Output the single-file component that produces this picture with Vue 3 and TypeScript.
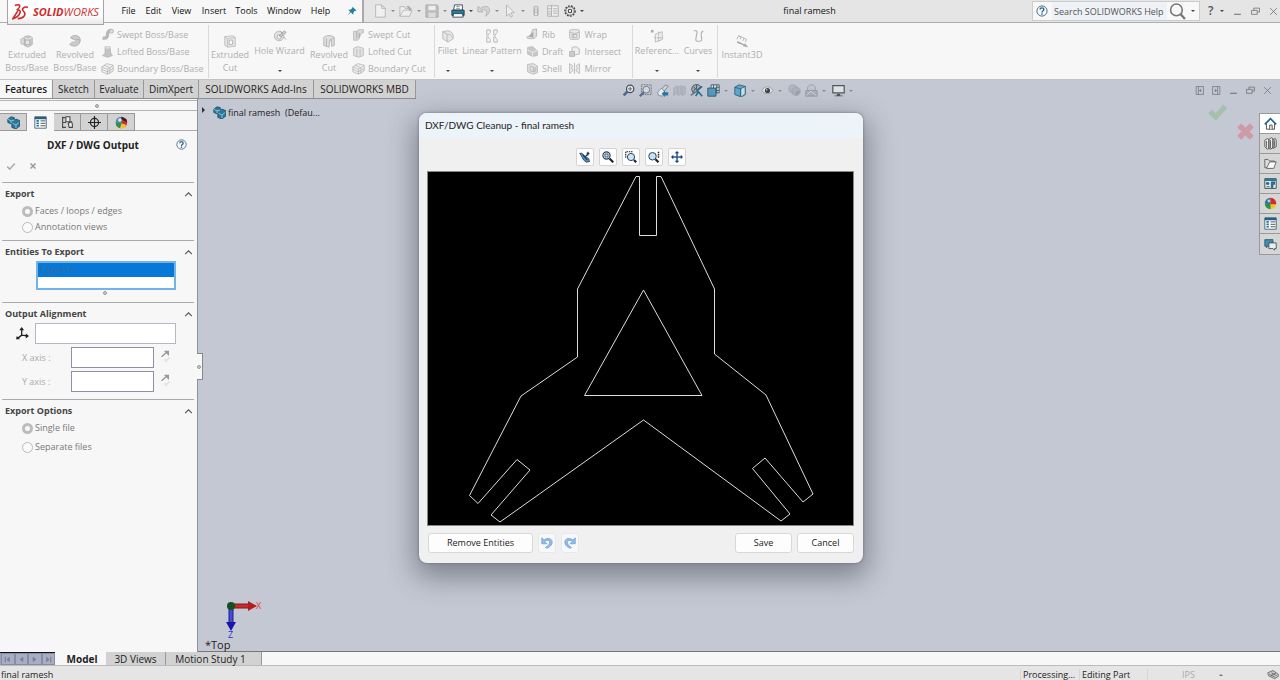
<script setup lang="ts">
import { ref } from 'vue'

interface Command { label: string; icon: string; lines?: string[]; menu?: boolean; width?: string }
interface Group { width: string; large: Command[]; lists: Command[][] }

const icons: Record<string, string> = {
  extrude: '<path d="M1 6l4-2v8l-4-1z" fill="#ddd" stroke="#b4b4b4"/><path d="M5 3l5-1 4 2v8l-5 3-4-2z" fill="#c8c8c8" stroke="#b0b0b0"/><path d="M9 6v8M5 4l4 2 5-2" fill="none" stroke="#eee"/><path d="M6 7h5v5H6z" fill="#e6e6e6" stroke="#b0b0b0"/>',
  revolve: '<path d="M3 4c3-4 11-3 11 3 0 6-7 9-12 5l3-3c4 2 5-3 1-3z" fill="#cbcbcb" stroke="#aeaeae"/><path d="M3 4l3 2M9 6l5 1" stroke="#aeaeae"/>',
  sweep: '<path d="M2 12c5 2 6-2 6-4s1-5 5-5" fill="none" stroke="#b8b8b8" stroke-width="4"/><circle cx="13" cy="4" r="2.4" fill="#ddd" stroke="#b0b0b0"/>',
  loft: '<path d="M5 2h6l1 8 2 3-6 2-6-2 3-3z" fill="#c4c4c4" stroke="#b4b4b4"/><ellipse cx="8" cy="3" rx="3" ry="1.5" fill="#ddd"/>',
  boundary: '<path d="M1 6l6-4 8 2v7l-7 4-7-3zM1 6l7 3 7-5M8 9v6M4 4l7 3v7M1 9l7 3 7-4" fill="#eee" stroke="#b8b8b8"/>',
  cut: '<path d="M2 3l9-1 3 2v10l-9 1-3-2zM2 3l3 2 9-1M5 5v10" fill="#e8e8e8" stroke="#bababa"/><path d="M7 7h4v5H7z" fill="#f7f7f7" stroke="#b0b0b0"/>',
  hole: '<circle cx="7" cy="8" r="5.5" fill="#e2e2e2" stroke="#b5b5b5"/><circle cx="7" cy="9" r="2.5" fill="#f7f7f7" stroke="#aaa"/><path d="M7 8l6-6 2 2-6 5zM9 3l2 3M12 9l3 3" fill="#ccc" stroke="#a4a4a4"/>',
  revcut: '<path d="M2 4c3-3 9-3 12 0v9l-3 1V7H9l-1 8-3-1-3-1z" fill="#e0e0e0" stroke="#b0b0b0"/><path d="M5 5v9M9 7l5-3" stroke="#b0b0b0"/>',
  sweepcut: '<path d="M2 4h4l2-2h6v4c-5 0-4 8-7 9H2z" fill="#d8d8d8" stroke="#b8b8b8"/><path d="M6 4v9M9 6v6" stroke="#a4a4a4"/>',
  loftcut: '<path d="M2 4l5-2 7 2v9l-6 2-6-2zM6 5v9M10 5v9" fill="#e3e3e3" stroke="#b8b8b8"/>',
  fillet: '<path d="M2 3l6-1c4 1 6 3 6 6v3l-6 4-6-4z" fill="#e6e6e6" stroke="#b8b8b8"/><path d="M2 3l5 3v9M7 6c3 0 5 1 6 4" fill="none" stroke="#b8b8b8"/>',
  pattern: '<path d="M2 1h4v3L4 6v1H2zM10 1h4v3l-2 2v1h-2zM2 9h2v1l2 2v3H2zM10 9h2v1l2 2v3h-4z" fill="#f4f4f4" stroke="#b0b0b0"/>',
  rib: '<path d="M8 2l5-1v9l-3 3H2l-1-2 5-2z" fill="#ddd" stroke="#b4b4b4"/><path d="M3 10l6-5v7z" fill="#aaa"/>',
  draft: '<path d="M2 3l6-1 6 5v6l-6 1-6-3z" fill="#c8c8c8" stroke="#b8b8b8"/><path d="M2 6l6 3 6-2M8 9v6" fill="none" stroke="#eee"/>',
  shell: '<path d="M2 3l7-1 5 3v8l-5 2-7-3zM5 5l4 1v6l-4-1z" fill="#e3e3e3" stroke="#b0b0b0"/><path d="M10 7v6M12 6v6" stroke="#b0b0b0"/>',
  wrap: '<rect x="2" y="2" width="12" height="12" rx="2" fill="#e8e8e8" stroke="#b4b4b4"/><path d="M2 5c4 2 8 2 12 0M5 8h6v4H5zM7 8v4" fill="none" stroke="#b0b0b0"/>',
  intersect: '<path d="M5 3l5-1 4 3v6l-5 1-4-2z" fill="#eee" stroke="#b0b0b0"/><path d="M2 8h6v6H2z" fill="#ccc" stroke="#b0b0b0"/>',
  mirror: '<path d="M2 2v12l4-3V9L4 8l2-3zM14 2v12l-4-3V9l2-1-2-3zM8 1v14" fill="#eee" stroke="#b0b0b0"/>',
  reference: '<path d="M1 1h3v3H1z" fill="#aaa"/><path d="M6 6l8-3v9l-8 3z" fill="#eee" stroke="#b8b8b8"/><path d="M10 3v12M5 10h10" fill="none" stroke="#aaa" stroke-dasharray="2 1"/>',
  curves: '<path d="M3 2h3c3 0-3 12 1 12h3c5 0 0-8 2-10l2-2" fill="none" stroke="#b0b0b0" stroke-width="1.300"/>',
  instant: '<path d="M2 6l2-4 2 1M4 2l9 4-1 3M7 3L6 6M10 5L9 8" fill="none" stroke="#b0b0b0"/><path d="M3 8l8 4v-2l4 5-6-1 1-1-8-3z" fill="#aaa"/>',
  page: '<path d="M3 1h7l4 4v10H3zM10 1v4h4" fill="#f0f0f0" stroke="#b4b4b4"/>',
  open: '<path d="M1 14V3h5l1 2h5v3M1 14L5 7h10l-3 7z" fill="#eee" stroke="#b4b4b4"/><path d="M8 3c3-2 5 0 5 2l2-1-2 4-3-3h2" fill="#aaa"/>',
  save: '<path d="M1 1h13l1 2v12H1z" fill="#bdbdbd" stroke="#acacac"/><path d="M4 2h8v5H4z" fill="#eee"/><path d="M4 10h8v5H4z" fill="#ddd"/>',
  print: '<path d="M4 1h9v6H3z" fill="#fff" stroke="#345"/><path d="M1 7h14v6H1z" fill="#257ba0" stroke="#213844"/><path d="M3 11h10l1 4H2z" fill="#fff" stroke="#345"/><path d="M6 3h4M6 5h4" stroke="#889"/>',
  undo: '<path d="M1 3v6h6L5 7c4-2 8 0 5 7 7-5 5-12-1-11-2 0-4 1-5 2z" fill="#d4d4d4" stroke="#b0b0b0"/>',
  cursor: '<path d="M4 1v13l3-3 2 4 2-1-2-4h4z" fill="#eee" stroke="#b0b0b0"/>',
  traffic: '<rect x="4.500" y="1" width="7" height="14" rx="3" fill="#b4b4b4"/><circle cx="8" cy="4" r="2" fill="#ddd"/><circle cx="8" cy="8" r="1.600" fill="#ddd"/><circle cx="8" cy="12" r="1.600" fill="#eee"/>',
  sheet: '<path d="M1 1h14v14H1zM6 1v14M1 5h5M1 9h5M1 12h5M8 5h6M8 8h6M8 11h6" fill="#eee" stroke="#a4a4a4"/>',
  gear: '<circle cx="8" cy="8" r="6.800" fill="none" stroke="#444" stroke-width="1.800" stroke-dasharray="2.300 1.780"/><circle cx="8" cy="8" r="5.600" fill="#eee" stroke="#444"/><circle cx="8" cy="8" r="2.300" fill="#fff" stroke="#444" stroke-width="1.500"/>',
  pin: '<path d="M9 1l6 6-2 1-1 0-2 3v3L6 10l-5 5 4-6-3-3h3l3-2z" fill="#257fa3"/>',
  help: '<circle cx="8" cy="8" r="6.800" fill="#f4fafd" stroke="#536b7c" stroke-width="1.300"/><path d="M5.500 6c0-3 5-3 5 0 0 2-2.500 1.500-2.500 4M8 11v2" fill="none" stroke="#1c688e" stroke-width="1.800"/>',
  zoomfit: '<path d="M6.500 9.500L2 14" stroke="#466f90" stroke-width="3.200"/><circle cx="10" cy="6" r="4.500" fill="#dce6ee" stroke="#49525d" stroke-width="1.500"/><path d="M7.500 6h5M10 3.500v5" stroke="#555"/>',
  zoomarea: '<path d="M3 1h12v12H3z" fill="none" stroke="#666" stroke-dasharray="2 1"/><path d="M6 10l-5 5" stroke="#527491" stroke-width="2.800"/><circle cx="9" cy="7" r="4.200" fill="#cbdce8" stroke="#666"/>',
  previous: '<path d="M12 1l3 2-6 7-3-3z" fill="#d0d5da" stroke="#707880"/><path d="M7 5L2 10l1 4 5 1 3-5z" fill="#e8ecef" stroke="#7b858f"/><path d="M15 10h-4V8l-4 4 4 4v-2h4z" fill="#247ba5"/>',
  section: '<path d="M1 5l4-3v9l-4 3zM6 4l4-2v10l-4 2zM11 3h4v9l-4 2z" fill="#b6bac4" stroke="#a3a8b4"/>',
  orient: '<path d="M2 7c0-7 8-8 11-4l-4 4-3-1-2 5z" fill="#a4adb5" stroke="#3d464e"/><path d="M4 3l3 3M8 1v5" stroke="#3d464e"/><path d="M1 14l7-5 3 2" fill="none" stroke="#6d7982" stroke-width="2"/><path d="M15 15L9 8l6-5M7 15l3-5" fill="none" stroke="#256f96" stroke-width="2"/>',
  views: '<path d="M5 1h10v10h-4V6H5z" fill="#d5dfe5" stroke="#34505f"/><path d="M1 5h10v10H1z" fill="#559bc0" stroke="#284c62"/><path d="M8 1v4M12 1v10M11 4h4M11 8h4" stroke="#34505f"/>',
  style: '<path d="M1 4l5-3 8 2v10l-5 3-8-3z" fill="#5da8cc" stroke="#31596f"/><path d="M1 4l7 2 6-3M8 6v9" fill="none" stroke="#31596f"/><path d="M9 6l4-2v8l-4 3z" fill="#cbdde7"/>',
  eye: '<path d="M1 8c4-6 10-6 14 0-4 5-10 5-14 0z" fill="#e6e9ee" stroke="#8c929d"/><circle cx="8" cy="8" r="3.200" fill="#444"/><circle cx="7" cy="7" r="1" fill="#ccc"/>',
  ballgray: '<circle cx="6" cy="6" r="5" fill="#b2b6c0" stroke="#a0a5b0"/><circle cx="10" cy="9" r="5" fill="#abb0ba" stroke="#a0a5b0"/><path d="M10 9h5l-5 5z" fill="#969ba7"/>',
  scene: '<circle cx="8" cy="6" r="5" fill="#bfc3cd" stroke="#989eaa"/><path d="M1 8h14v7H1z" fill="#a8adb8" stroke="#9298a4"/><path d="M2 14l5-5 7 5" fill="none" stroke="#ddd"/>',
  monitor: '<path d="M1 2h14v9H1z" fill="#dde3e8" stroke="#555" stroke-width="1.500"/><path d="M6 12h4v2h3v1H3v-1h3z" fill="#555"/>',
  part: '<path d="M1 4l4-3 4 1v3l3-1 4 2v6l-5 4-5-2V10L1 8z" fill="#2c789d" stroke="#17475f"/><path d="M1 4l4 2 4-1M5 6v3M7 9l4 2 4-3M11 11v4" fill="none" stroke="#9fd0e4"/>',
  props: '<path d="M1 1h14v14H1z" fill="#fff" stroke="#285672"/><path d="M1 1h14v3H1z" fill="#265f81"/><path d="M3 6h3M3 9h3M3 12h3" stroke="#2c789d" stroke-width="2"/><path d="M8 6h6M8 9h6M8 12h6" stroke="#333"/>',
  config: '<path d="M2 1v14M2 2h3M2 8h4M2 14h4M6 1h5v6H6zM9 9l4-2 1 3v4h-4z" fill="#eee" stroke="#444" stroke-width="1.300"/>',
  target: '<circle cx="8" cy="8" r="5" fill="none" stroke="#222" stroke-width="1.500"/><path d="M0 8h16M8 0v16" stroke="#222" stroke-width="1.400"/>',
  ball: '<circle cx="8" cy="8" r="7" fill="#efc52b"/><path d="M8 1a7 7 0 00-7 7l7 1z" fill="#3268b0"/><path d="M8 1a7 7 0 017 8L8 9z" fill="#d22c31"/><path d="M1 8l7 1v6a7 7 0 01-7-7z" fill="#22954b"/><circle cx="6" cy="5" r="1.800" fill="#fff" opacity=".65"/>',
  palette: '<circle cx="8" cy="8" r="7" fill="#d22c31"/><path d="M8 1a7 7 0 00-7 7l7 1z" fill="#3d9bc1"/><path d="M8 1l6 3 1 4-7-4z" fill="#302326"/><path d="M1 8l7 1-2 6a7 7 0 01-5-7z" fill="#22954b"/><path d="M8 9l6 2a7 7 0 01-8 4z" fill="#efc52b"/><circle cx="6" cy="5" r="2.200" fill="#fff" opacity=".8"/>',
  home: '<path d="M3 8v7h10V8" fill="#fff" stroke="#333"/><path d="M1 9l7-7 7 7" fill="none" stroke="#1d6287" stroke-width="2"/><path d="M7 15v-5h3v5" fill="#fff" stroke="#333"/>',
  library: '<path d="M1 4l3-2 2 1v11l-2 1-3-3zM6 3l3-2 2 1v11l-3 2-2-1zM11 3l3-1 1 2v8l-4 2z" fill="#eee" stroke="#444"/><path d="M3 5v8M8 4v10M13 4v8" stroke="#444"/>',
  folder: '<path d="M1 13V3h4l2 2h6v3L9 14z" fill="#ddd" stroke="#555"/><path d="M3 14L7 6h8l-3 8z" fill="#fafafa" stroke="#555"/>',
  viewpal: '<path d="M1 2h14v12H1z" fill="#e4f2f7" stroke="#333"/><path d="M1 2h14v3H1z" fill="#2c789d"/><path d="M3 7h3v2H3zM9 6h4v3h-2v4H9zM3 12h4" fill="#2c789d" stroke="#24546c"/>',
  forum: '<path d="M1 2h10v8H5l-2 2v-2H1z" fill="#3e8dae" stroke="#24546c"/><path d="M6 6h9v7h-2v2l-2-2H6z" fill="#e4f0f4" stroke="#444"/>',
  minimize: '<path d="M2 12h12v2H2z" fill="#777"/>',
  restore: '<path d="M5 6V2h10v7h-4M1 6h10v7H1z" fill="none" stroke="#777" stroke-width="1.500"/>',
  close: '<path d="M2 2l12 12M14 2L2 14" stroke="#777" stroke-width="1.500"/>',
  paneleft: '<path d="M2 1h13v14H2zM6 1v14" fill="none" stroke="#777d8a" stroke-width="1.500"/><path d="M11 5v6L7 8z" fill="#777"/>',
  paneright: '<path d="M1 1h13v14H1zM10 1v14" fill="none" stroke="#777d8a" stroke-width="1.500"/><path d="M5 5v6l4-3z" fill="#777"/>',
  search: '<circle cx="7" cy="6.500" r="5.500" fill="#f8f8f8" stroke="#777" stroke-width="1.500"/><path d="M11 10.500l4 4.500" stroke="#777" stroke-width="2.200"/>',
  check: '<path d="M1 9l3-3 3 3 6-7 3 3-9 10z" fill="currentColor"/>',
  cross: '<path d="M1 4l3-3 4 4 4-4 3 3-4 4 4 4-3 3-4-4-4 4-3-3 4-4z" fill="currentColor" stroke="currentColor" stroke-linejoin="round"/>',
  tick: '<path d="M2 9l4 4 8-9" fill="none" stroke="#aaa" stroke-width="2.400"/>',
  smallx: '<path d="M4 4l8 8M12 4l-8 8" stroke="#999" stroke-width="2.400"/>',
  axes: '<path d="M7 2v8l7 1M7 10l-5 4" fill="none" stroke="#222" stroke-width="1.600"/><path d="M4 4l3-4 3 4zM12 8l4 3-4 3zM1 11l4 4H0z" fill="#222"/>',
  flip: '<path d="M2 9l7-6" stroke="#999" stroke-width="2"/><path d="M5 1h7v7z" fill="#999"/><path d="M8 14l5-4M7 12v4h4" stroke="#ddd" fill="none" stroke-width="1.500"/>',
  pen: '<path d="M1 3l3 0 5 5 4 2 1 4-4 1-4-3-2-4z" fill="#4c8fc0" stroke="#1b344c"/><path d="M5 5l6 7M8 8l5-5M14 3h-4M12 1v5" fill="none" stroke="#1d3453" stroke-width="1.500"/>',
  lensfit: '<circle cx="6" cy="6" r="4.800" fill="#cfe6f5" stroke="#29405c" stroke-width="1.500"/><path d="M10 10l5 5" stroke="#1b2739" stroke-width="3"/><path d="M4 4h4v4H4z" fill="none" stroke="#29405c"/>',
  lensarea: '<path d="M1 9V1h9" fill="none" stroke="#222" stroke-width="1.500" stroke-dasharray="2 1"/><circle cx="8" cy="8" r="4.800" fill="#cfe6f5" stroke="#29405c" stroke-width="1.300"/><path d="M12 12l3 3" stroke="#1b2739" stroke-width="3"/>',
  lensdyn: '<circle cx="6" cy="7" r="5" fill="#c4e3f4" stroke="#29405c" stroke-width="1.300"/><path d="M10 11l4 4" stroke="#1b2739" stroke-width="3"/><path d="M14 1v9" stroke="#222" stroke-width="2" stroke-dasharray="2 1"/>',
  pan: '<path d="M8 2v12M2 8h12" stroke="#245e9d" stroke-width="2"/><path d="M8 0l3 3H5zM8 16l3-3H5zM0 8l3-3v6zM16 8l-3-3v6z" fill="#173e7b"/>',
  back: '<path d="M1 1v8h7L5 6c4-4 9 0 5 5l-4 3 2 1c10-4 8-14 1-13-2 0-4 1-5 2z" fill="#94bce6" stroke="#6d9ed6"/>',
  forward: '<path d="M15 1v8H8l3-3C7 2 2 6 6 11l4 3-2 1C-2 11 0 1 7 2c2 0 4 1 5 2z" fill="#94bce6" stroke="#6d9ed6"/>',
  first: '<path d="M4 3v10" stroke="#777d9b" stroke-width="2"/><path d="M12 3v10L6 8z" fill="#777d9b"/>',
  prev: '<path d="M11 3v10L5 8z" fill="#777d9b"/>',
  next: '<path d="M5 3v10l6-5z" fill="#777d9b"/>',
  last: '<path d="M12 3v10" stroke="#777d9b" stroke-width="2"/><path d="M4 3v10l6-5z" fill="#777d9b"/>',
  tag: '<path d="M1 5l7-3 7 5v3l-5 3-8-4z" fill="#ccc" stroke="#555"/><path d="M3 7l8 4M6 5l7 4M5 9l7-4" stroke="#555"/>',
  chevron: '<path d="M2 11l6-6 6 6" fill="none" stroke="#555" stroke-width="2"/>',
}

const menus = [
  { label: 'File', width: 'w25' }, { label: 'Edit', width: 'w25' }, { label: 'View', width: 'w31' },
  { label: 'Insert', width: 'w34' }, { label: 'Tools', width: 'w31' }, { label: 'Window', width: 'w44' }, { label: 'Help', width: 'w29' },
]
const quick = [
  { icon: 'page', name: 'New' }, { icon: 'open', name: 'Open' }, { icon: 'save', name: 'Save file' },
  { icon: 'print', name: 'Print', on: true }, { icon: 'undo', name: 'Undo' }, { icon: 'cursor', name: 'Select' },
]
const groups: Group[] = [
  {
    width: 'w206',
    large: [
      { label: 'Extruded Boss/Base', lines: ['Extruded', 'Boss/Base'], icon: 'extrude', width: 'w48' },
      { label: 'Revolved Boss/Base', lines: ['Revolved', 'Boss/Base'], icon: 'revolve', width: 'w48' },
    ],
    lists: [[{ label: 'Swept Boss/Base', icon: 'sweep' }, { label: 'Lofted Boss/Base', icon: 'loft' }, { label: 'Boundary Boss/Base', icon: 'boundary' }]],
  },
  {
    width: 'w226',
    large: [
      { label: 'Extruded Cut', lines: ['Extruded', 'Cut'], icon: 'cut', width: 'w42' },
      { label: 'Hole Wizard', lines: ['Hole Wizard'], icon: 'hole', menu: true, width: 'w57' },
      { label: 'Revolved Cut', lines: ['Revolved', 'Cut'], icon: 'revcut', width: 'w42' },
    ],
    lists: [[{ label: 'Swept Cut', icon: 'sweepcut' }, { label: 'Lofted Cut', icon: 'loftcut' }, { label: 'Boundary Cut', icon: 'boundary' }]],
  },
  {
    width: 'w198',
    large: [
      { label: 'Fillet', lines: ['Fillet'], icon: 'fillet', menu: true, width: 'w25' },
      { label: 'Linear Pattern', lines: ['Linear Pattern'], icon: 'pattern', menu: true, width: 'w64' },
    ],
    lists: [
      [{ label: 'Rib', icon: 'rib' }, { label: 'Draft', icon: 'draft' }, { label: 'Shell', icon: 'shell' }],
      [{ label: 'Wrap', icon: 'wrap' }, { label: 'Intersect', icon: 'intersect' }, { label: 'Mirror', icon: 'mirror' }],
    ],
  },
  {
    width: 'w85',
    large: [
      { label: 'Reference Geometry', lines: ['Referenc...'], icon: 'reference', menu: true, width: 'w48' },
      { label: 'Curves', lines: ['Curves'], icon: 'curves', menu: true, width: 'w34' },
    ],
    lists: [],
  },
  { width: 'w50', large: [{ label: 'Instant3D', lines: ['Instant3D'], icon: 'instant', width: 'w48' }], lists: [] },
]
const tabs = [
  { label: 'Features', width: 'w53' }, { label: 'Sketch', width: 'w42' }, { label: 'Evaluate', width: 'w49' },
  { label: 'DimXpert', width: 'w55' }, { label: 'SOLIDWORKS Add-Ins', width: 'w115' }, { label: 'SOLIDWORKS MBD', width: 'w102' },
]
const hud = [
  { icon: 'zoomfit', name: 'Zoom to fit' }, { icon: 'zoomarea', name: 'Zoom to area' }, { icon: 'previous', name: 'Previous view' },
  { icon: 'section', name: 'Section view' }, { icon: 'orient', name: 'Dynamic annotation views' },
  { icon: 'views', name: 'View orientation', menu: true }, { icon: 'style', name: 'Display style', menu: true },
  { icon: 'eye', name: 'Hide or show items', menu: true }, { icon: 'ballgray', name: 'Edit appearance' },
  { icon: 'scene', name: 'Apply scene', menu: true }, { icon: 'monitor', name: 'View settings', menu: true },
]
const managers = [
  { icon: 'part', name: 'Feature tree' }, { icon: 'props', name: 'Property manager' }, { icon: 'config', name: 'Configurations' },
  { icon: 'target', name: 'Dimensions' }, { icon: 'palette', name: 'Display manager' },
]
const taskPane = ['home', 'library', 'folder', 'viewpal', 'ball', 'props', 'forum']
const cleanupTools = [
  { icon: 'pen', name: 'Select' }, { icon: 'lensfit', name: 'Zoom to fit' }, { icon: 'lensarea', name: 'Zoom to area' },
  { icon: 'lensdyn', name: 'Zoom in or out' }, { icon: 'pan', name: 'Pan' },
]
const activeTab = ref('Features')
const source = ref('faces')
const files = ref('single')
</script>

<template>
  <div class="app">
    <header class="titlebar">
      <div class="menu-area">
        <div class="logo">
          <svg class="ds" viewBox="0 0 18 18" aria-hidden="true"><path d="M3 2c6-2 7 1 2 5M5 7c7-1 3 7-4 9l5-8M17 4c-5-1-7 2-5 4 4 4 0 8-6 8" fill="none" stroke="#cf2a27" stroke-width="1.700" /></svg>
          <span class="brand"><b>SOLID</b>WORKS</span>
        </div>
        <nav class="menus" aria-label="Main menu">
          <button v-for="m in menus" :key="m.label" type="button" :class="m.width">{{ m.label }}</button>
        </nav>
        <button class="pin" type="button" aria-label="Pin menu"><svg class="i10" viewBox="0 0 16 16" v-html="icons.pin" /></button>
      </div>
      <div class="quick">
        <button v-for="q in quick" :key="q.icon" type="button" class="quick-btn" :aria-label="q.name">
          <svg class="i14" viewBox="0 0 16 16" v-html="icons[q.icon]" /><i class="caret" :class="{ on: q.on }" />
        </button>
        <button type="button" class="slim" aria-label="Rebuild"><svg class="i12" viewBox="0 0 16 16" v-html="icons.traffic" /></button>
        <button type="button" class="slim" aria-label="File properties"><svg class="i12" viewBox="0 0 16 16" v-html="icons.sheet" /></button>
        <button type="button" class="quick-btn" aria-label="Options"><svg class="i12" viewBox="0 0 16 16" v-html="icons.gear" /><i class="caret on" /></button>
      </div>
      <div class="doc-name">final ramesh</div>
      <div class="search">
        <svg class="i12" viewBox="0 0 16 16" v-html="icons.help" />
        <input type="text" placeholder="Search SOLIDWORKS Help" aria-label="Search SOLIDWORKS Help" />
        <button type="button" aria-label="Search"><svg class="i17" viewBox="0 0 16 16" v-html="icons.search" /></button>
        <i class="caret on" />
      </div>
      <div class="window-controls">
        <button type="button" class="question" aria-label="Help menu">?<i class="caret on" /></button>
        <button v-for="c in ['minimize', 'restore', 'close']" :key="c" type="button" :aria-label="c"><svg class="i9" viewBox="0 0 16 16" v-html="icons[c]" /></button>
      </div>
    </header>

    <section class="ribbon" aria-label="Features toolbar">
      <div v-for="(g, gi) in groups" :key="gi" class="group" :class="g.width">
        <button v-for="c in g.large" :key="c.label" type="button" class="large" :class="[c.width, { dropdown: c.menu }]" :aria-label="c.label">
          <svg class="i14" viewBox="0 0 16 16" v-html="icons[c.icon]" />
          <span v-for="l in c.lines" :key="l">{{ l }}</span>
          <i v-if="c.menu" class="caret on" />
        </button>
        <div v-for="(list, li) in g.lists" :key="li" class="list">
          <button v-for="c in list" :key="c.label" type="button"><svg class="i13" viewBox="0 0 16 16" v-html="icons[c.icon]" />{{ c.label }}</button>
        </div>
      </div>
    </section>

    <div class="tab-row">
      <nav class="tabs" aria-label="Command tabs">
        <button v-for="t in tabs" :key="t.label" type="button" :class="[t.width, { active: activeTab === t.label }]" @click="activeTab = t.label">{{ t.label }}</button>
      </nav>
      <div class="hud">
        <button v-for="h in hud" :key="h.icon" type="button" :class="{ wide: h.menu }" :aria-label="h.name">
          <svg class="i13" viewBox="0 0 16 16" v-html="icons[h.icon]" /><i v-if="h.menu" class="caret" />
        </button>
      </div>
      <div class="doc-controls">
        <button v-for="c in ['paneleft', 'paneright', 'minimize', 'restore', 'close']" :key="c" type="button" :aria-label="'Document ' + c"><svg class="i9" viewBox="0 0 16 16" v-html="icons[c]" /></button>
      </div>
    </div>

    <main class="workspace">
      <aside class="panel">
        <div class="grip"><i class="dot" /></div>
        <nav class="managers" aria-label="Managers">
          <button v-for="(m, i) in managers" :key="m.icon" type="button" :class="{ active: i === 1 }" :aria-label="m.name"><svg class="i13" viewBox="0 0 16 16" v-html="icons[m.icon]" /></button>
        </nav>
        <div class="panel-title">
          <h1>DXF / DWG Output</h1>
          <button type="button" aria-label="Help"><svg class="i11" viewBox="0 0 16 16" v-html="icons.help" /></button>
        </div>
        <div class="confirm">
          <button type="button" aria-label="OK"><svg class="i10" viewBox="0 0 16 16" v-html="icons.tick" /></button>
          <button type="button" aria-label="Close"><svg class="i10" viewBox="0 0 16 16" v-html="icons.smallx" /></button>
        </div>

        <section class="block export">
          <h2>Export<svg class="i9" viewBox="0 0 16 16" v-html="icons.chevron" /></h2>
          <label><input v-model="source" type="radio" name="source" value="faces" />Faces / loops / edges</label>
          <label><input v-model="source" type="radio" name="source" value="views" />Annotation views</label>
        </section>
        <section class="block entities">
          <h2>Entities To Export<svg class="i9" viewBox="0 0 16 16" v-html="icons.chevron" /></h2>
          <ul class="selection"><li>Face&lt;1&gt;</li></ul>
          <i class="dot" />
        </section>
        <section class="block align">
          <h2>Output Alignment<svg class="i9" viewBox="0 0 16 16" v-html="icons.chevron" /></h2>
          <div class="origin"><svg class="i13" viewBox="0 0 16 16" v-html="icons.axes" /><input type="text" aria-label="Output coordinate system" /></div>
          <div v-for="a in ['X', 'Y']" :key="a" class="axis">
            <label :for="'axis-' + a">{{ a }} axis :</label><input :id="'axis-' + a" type="text" />
            <button type="button" :aria-label="'Reverse ' + a"><svg class="i12" viewBox="0 0 16 16" v-html="icons.flip" /></button>
          </div>
        </section>
        <section class="block options">
          <h2>Export Options<svg class="i9" viewBox="0 0 16 16" v-html="icons.chevron" /></h2>
          <label><input v-model="files" type="radio" name="files" value="single" />Single file</label>
          <label><input v-model="files" type="radio" name="files" value="separate" />Separate files</label>
        </section>
        <div class="splitter"><i class="dot" /></div>
      </aside>

      <div class="viewport">
        <div class="tree"><i class="expand" /><svg class="i13" viewBox="0 0 16 16" v-html="icons.part" /><span>final ramesh&nbsp; (Defau...</span></div>
        <button class="accept" type="button" aria-label="Accept"><svg class="i20" viewBox="0 0 16 16" v-html="icons.check" /></button>
        <button class="reject" type="button" aria-label="Reject"><svg class="i17" viewBox="0 0 16 16" v-html="icons.cross" /></button>
        <nav class="task-pane" aria-label="Task pane">
          <button v-for="(t, i) in taskPane" :key="t" type="button" :class="{ active: i === 0 }" :aria-label="t"><svg class="i13" viewBox="0 0 16 16" v-html="icons[t]" /></button>
        </nav>
        <div class="triad">
          <svg viewBox="0 0 64 44" aria-hidden="true">
            <path d="M8 6h20v4H8z" fill="#c92a2a" stroke="#7c1c1c" /><path d="M25 3l9 5-9 5z" fill="#b51d1d" />
            <path d="M6 10h4v16H6z" fill="#4a4ad0" stroke="#1c1c9a" /><path d="M3 24h10l-5 9z" fill="#1717ab" />
            <circle cx="8" cy="8" r="4" fill="#14501c" />
            <text x="33" y="11" fill="#e23c46" font-size="9">X</text><text x="5" y="40" fill="#2a2ae0" font-size="9">Z</text>
          </svg>
          <span>*Top</span>
        </div>

        <div class="dialog" role="dialog" aria-labelledby="dialog-title">
          <h2 id="dialog-title">DXF/DWG Cleanup - final ramesh</h2>
          <div class="tools">
            <button v-for="t in cleanupTools" :key="t.icon" type="button" :aria-label="t.name"><svg class="i12" viewBox="0 0 16 16" v-html="icons[t.icon]" /></button>
          </div>
          <svg class="drawing" viewBox="428 172 425 353" aria-label="Part outline">
            <g fill="none" stroke="#dcdcdc" stroke-width="1">
              <path d="M636 176.500H639.500V235.500H656.500V176.500H661L714.500 289V354L766 395L813 494L803 502L765 458L752.500 468.500L790 514L781 521L643.500 420L500 522L491 515L530 470L517 459.500L478 503.500L469.500 495.500L521 396L577.500 357V289Z" />
              <path d="M643.500 290L702 395.500H584.500Z" />
            </g>
          </svg>
          <div class="actions">
            <button type="button" class="remove">Remove Entities</button>
            <button type="button" class="mini" aria-label="Undo"><svg class="i12" viewBox="0 0 16 16" v-html="icons.back" /></button>
            <button type="button" class="mini" aria-label="Redo"><svg class="i12" viewBox="0 0 16 16" v-html="icons.forward" /></button>
            <button type="button" class="save">Save</button>
            <button type="button" class="save">Cancel</button>
          </div>
        </div>
      </div>
    </main>

    <div class="sheets">
      <div class="nav-buttons">
        <button v-for="n in ['first', 'prev', 'next', 'last']" :key="n" type="button" :aria-label="n + ' sheet'"><svg class="i9" viewBox="0 0 16 16" v-html="icons[n]" /></button>
      </div>
      <button type="button" class="model active">Model</button>
      <button type="button" class="w60">3D Views</button>
      <button type="button" class="motion">Motion Study 1</button>
    </div>

    <footer class="status">
      <span class="name">final ramesh</span>
      <span class="cell first">Processing...</span>
      <span class="cell second">Editing Part</span>
      <span class="cell units">IPS<i class="caret up" /></span>
      <svg class="i12" viewBox="0 0 16 16" v-html="icons.tag" />
    </footer>
  </div>
</template>

<style>
html, body { margin: 0; background: #c4c8d3; }
</style>

<style scoped>
* { box-sizing: border-box; }
.app { min-height: 100vh; display: flex; flex-direction: column; font: 9px/12px "Open Sans", "Noto Sans", sans-serif; color: #222; background: #c4c8d3; }
button, input { font: inherit; color: inherit; margin: 0; padding: 0; border: 0; background: none; }
button { display: flex; align-items: center; justify-content: center; white-space: nowrap; }
h1, h2, ul { margin: 0; padding: 0; }
svg { display: block; flex: none; }
.i9 { width: 9px; height: 9px; } .i10 { width: 10px; height: 10px; } .i11 { width: 11px; height: 11px; }
.i12 { width: 12px; height: 12px; } .i13 { width: 13px; height: 13px; } .i14 { width: 14px; height: 14px; }
.i17 { width: 17px; height: 17px; } .i20 { width: 20px; height: 20px; }
.w25 { width: 25px; } .w29 { width: 29px; } .w31 { width: 31px; } .w34 { width: 34px; } .w42 { width: 42px; } .w44 { width: 44px; }
.w48 { width: 48px; } .w49 { width: 49px; } .w50 { width: 50px; } .w53 { width: 53px; } .w55 { width: 55px; } .w57 { width: 57px; } .w60 { width: 60px; }
.w64 { width: 64px; } .w85 { width: 85px; } .w102 { width: 102px; } .w115 { width: 115px; }
.w198 { width: 198px; } .w206 { width: 206px; } .w226 { width: 226px; }
.caret { flex: none; width: 0; height: 0; border: 2px solid transparent; border-top-color: #8b8b8b; border-bottom: 0; }
.caret.on { border-top-color: #444; }
.caret.up { border-top: 0; border-bottom: 2px solid #777; }
.dot { flex: none; width: 4px; height: 4px; border-radius: 50%; background: #ccc; border: 1px solid #999; }

.titlebar { height: 23px; flex: none; display: flex; background: #e5e5e5; border-bottom: 1px solid #adadad; }
.menu-area { position: relative; width: 364px; flex: none; display: flex; background: #f7f7f7; border-right: 2px solid #aaa; padding-left: 116px; }
.logo { position: absolute; left: 7px; top: 0; z-index: 2; width: 97px; height: 25px; display: flex; align-items: center; gap: 4px; padding-left: 4px; background: linear-gradient(#fff 60%, #e8e8e8); border: 1px solid #a5a5a5; border-top: 0; }
.ds { width: 17px; height: 18px; }
.brand { color: #d02b28; font: italic 11px/14px "Open Sans", sans-serif; }
.menus { display: flex; color: #111; }
.pin { margin-left: 12px; }
.quick { display: flex; align-items: center; padding-left: 7px; flex: none; }
.quick-btn { width: 26px; gap: 4px; }
.slim { width: 17px; }
.doc-name { flex: 1; text-align: center; line-height: 22px; color: #111; }
.search { width: 168px; flex: none; margin: 1px 0; display: flex; align-items: center; border: 1px solid #ccc; background: #f8f8f8; padding-left: 3px; gap: 4px; }
.search input { width: 115px; height: 18px; background: #eef1f6; padding-left: 2px; }
.search input::placeholder { color: #555; opacity: 1; }
.search button { margin: 0 1px 0 -2px; }
.window-controls { display: flex; align-items: center; width: 80px; flex: none; color: #555; gap: 9px; padding-left: 8px; }
.question { gap: 7px; font-size: 12px; font-weight: 600; }

.ribbon { height: 57px; flex: none; display: flex; background: #f7f7f7; border-bottom: 1px solid #c2c2c2; color: #afafaf; padding: 2px 0 1px 3px; }
.group { display: flex; border-right: 1px solid #d9d9d9; }
.group:last-child { border: 0; }
.large { flex: none; flex-direction: column; justify-content: flex-start; padding-top: 9px; line-height: 13px; }
.large.dropdown { padding-top: 4px; }
.large.dropdown svg { margin-bottom: 1px; }
.large .caret { margin-top: 13px; }
.list { padding: 1px 0 0 2px; display: flex; flex-direction: column; }
.list + .list { padding-left: 5px; }
.list button { height: 17px; justify-content: flex-start; gap: 3px; }

.tab-row { height: 19px; flex: none; display: flex; }
.tabs { flex: none; display: flex; border-bottom: 1px solid #8d8d8d; font-size: 10px; color: #222; }
.tabs button { background: #d2d2d2; border-right: 1px solid #999; }
.tabs .active { background: #f7f7f7; font-weight: 600; }
.hud { flex: 1; display: flex; align-items: center; padding: 2px 0 0 206px; }
.hud button { width: 17px; justify-content: flex-start; }
.hud .wide { width: 27px; gap: 4px; }
.doc-controls { display: flex; align-items: center; gap: 8px; padding: 2px 8px 0 0; }

.workspace { flex: 1; display: grid; grid-template-columns: 198px 1fr; min-height: 0; }
.panel { position: relative; background: #f7f7f7; border-right: 1px solid #8e929d; color: #777; padding-top: 1px; }
.grip { height: 11px; display: flex; align-items: center; justify-content: center; border: solid #b5b5b5; border-width: 1px 0; padding-right: 3px; }
.managers { display: flex; height: 20px; padding-top: 2px; border-bottom: 1px solid #aaa; }
.managers button { width: 27px; height: 18px; background: #d2d2d2; border: solid #999; border-width: 1px 1px 1px 0; }
.managers .active { background: #f7f7f7; border-color: #f7f7f7; }
.panel-title { display: flex; align-items: center; height: 27px; }
.panel-title h1 { flex: 1; text-align: center; font-size: 10px; font-weight: 700; color: #222; padding-left: 10px; }
.panel-title button { margin-right: 10px; }
.confirm { display: flex; gap: 12px; padding: 3px 0 0 6px; height: 24px; align-items: flex-start; }
.block { margin: 0 3px 0 2px; border-top: 1px solid #ababab; }
.block h2 { display: flex; justify-content: space-between; align-items: center; font-size: 9px; font-weight: 700; color: #444; height: 20px; padding: 2px 1px 0 3px; }
.block label { display: flex; align-items: center; gap: 2px; height: 16px; padding-left: 20px; }
input[type="radio"] { appearance: none; width: 11px; height: 11px; border: 1px solid #bbb; border-radius: 50%; background: #fafafa; }
input[type="radio"]:checked { border: 3px solid #bcbcbc; }
.export { height: 58px; }
.entities { height: 62px; }
.align { height: 97px; }
.options label + label { margin-top: 3px; }
.selection { margin: 0 18px 0 34px; height: 29px; background: #fff; border: 2px solid #72b4ea; list-style: none; color: #45678e; line-height: 13px; }
.selection li { height: 14px; background: #0678d7; padding-left: 2px; }
.entities .dot { display: block; margin: 1px auto 0 101px; }
.origin { display: flex; align-items: center; gap: 6px; padding-left: 14px; }
.origin input { width: 141px; height: 21px; background: #fff; border: 1px solid #b5b8c2; }
.axis { display: flex; align-items: center; margin-top: 3px; }
.axis label { width: 69px; color: #aaa; height: 21px; }
.axis input { width: 83px; height: 21px; background: #fff; border: 1px solid #8c91a4; }
.axis button { margin: 0 0 4px 6px; }
.splitter { position: absolute; left: 197px; top: 254px; z-index: 1; width: 6px; height: 27px; background: #f7f7f7; border: 1px solid #888; border-left: 0; display: flex; align-items: center; }

.viewport { position: relative; background: #c4c8d3; border-bottom: 1px solid #777; }
.tree { display: flex; align-items: center; padding: 7px 0 0 4px; gap: 2px; color: #222; }
.expand { border: 3px solid transparent; border-left-color: #333; border-right: 0; margin: 0 6px 5px 0; }
.accept { position: absolute; right: 53px; top: 3px; color: #a5c0ab; }
.reject { position: absolute; right: 26px; top: 24px; color: #cc9ba5; }
.task-pane { position: absolute; right: 0; top: 14px; width: 21px; border: 1px solid #999; border-right: 0; }
.task-pane button { width: 20px; height: 20px; background: #d6d6d6; border-bottom: 1px solid #999; }
.task-pane button:last-child { border-bottom: 0; }
.task-pane .active { background: #fff; }
.triad { position: absolute; left: 7px; bottom: 0; font-size: 11px; line-height: 12px; }
.triad svg { width: 64px; height: 44px; margin: 0 0 -3px 18px; }

.dialog { position: absolute; left: 221px; top: 14px; width: 444px; background: #f0f0f0; border-radius: 8px; overflow: hidden; box-shadow: 0 0 3px #6b7079, 0 10px 28px 4px rgba(40, 45, 52, .45); color: #222; }
.dialog h2 { height: 25px; padding-left: 6px; background: #ecf3f9; font: 400 10px/25px Lato, "Open Sans", sans-serif; }
.tools { display: flex; justify-content: center; gap: 5px; padding: 10px 0 5px 0; margin-right: 21px; }
.tools button { width: 18px; height: 18px; background: #fff; border: 1px solid #d4d4d4; border-radius: 2px; }
.drawing { width: 427px; height: 355px; margin-left: 8px; background: #000; border: 1px solid #888; }
.actions { display: flex; padding: 7px 9px 10px 9px; align-items: center; gap: 5px; }
.actions button { height: 20px; background: #fdfdfd; border: 1px solid #d8d8d8; border-radius: 3px; }
.actions .remove { width: 105px; }
.actions .mini { width: 18px; background: #f7f8fa; border-color: #e8e8e8; }
.actions .save { width: 57px; }
.mini + .save { margin-left: auto; }

.sheets { height: 14px; flex: none; display: flex; background: #f7f7f7; font-size: 10px; border-bottom: 1px solid #bbb; }
.sheets > button { background: #d2d2d2; border-right: 1px solid #999; height: 13px; color: #222; }
.sheets > .active { background: #f7f7f7; font-weight: 700; border: 0; }
.model { width: 51px; padding-left: 3px; }
.motion { width: 96px; padding-right: 6px; }
.nav-buttons { width: 55px; padding-left: 1px; display: flex; background: #9ea2b8; border-top: 1px solid #111; }
.nav-buttons button { flex: 1; border: 1px solid #888da6; background: #a9adc1; }
.status { height: 14px; flex: none; display: flex; align-items: center; overflow: hidden; background: #e5e5e5; color: #222; padding: 3px 1px 0 0; }
.name { flex: 1; padding-left: 1px; }
.cell { border-left: 1px solid #d6d6d6; padding-left: 2px; }
.first { width: 59px; }
.second { width: 68px; }
.units { width: 120px; padding-left: 34px; display: flex; align-items: center; gap: 24px; color: #aaa; }
</style>
